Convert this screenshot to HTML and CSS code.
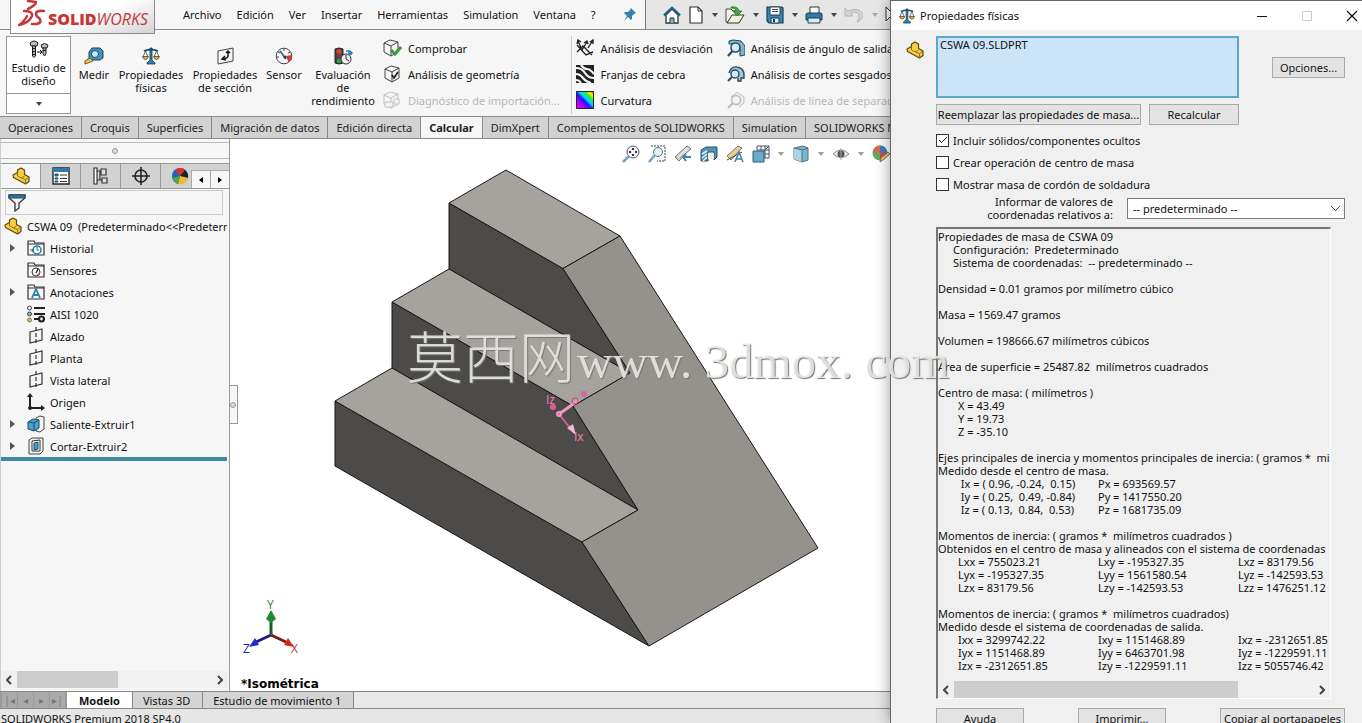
FILE: index.html
```html
<!DOCTYPE html>
<html lang="es">
<head>
<meta charset="utf-8">
<title>SOLIDWORKS Premium 2018 SP4.0</title>
<link rel="stylesheet" href="styles.css">
</head>
<body>
<svg class="defs" aria-hidden="true">
  <defs>
    <symbol id="part" viewBox="0 0 18 18"><path d="M1 8l4.500-2.500V3L9 1l3.500 2v4.500L17 10v4.500L13.500 17 1.500 10.500z" fill="#f7cf45" stroke="#5e450b" stroke-width="1.200" stroke-linejoin="round"/><path d="M5.500 5.500V9l4 2 3-2M13.500 12.500V17M13.500 12.500L17 10M9.500 11l4 1.500" fill="none" stroke="#8a680f" stroke-width=".9"/></symbol>
    <symbol id="scale" viewBox="0 0 18 18"><path d="M8 1h2v12l3 3v1H5v-1l3-3z" fill="#2c81ad" stroke="#123f5c" stroke-width=".8"/><path d="M2 4q7-3 14 0" fill="none" stroke="#174e70" stroke-width="1.800"/><path d="M3.500 4L1 10h5zM14.500 4L12 10h5z" fill="#fff" stroke="#444" stroke-width=".8"/><path d="M.5 9.500h6q-1 3-3 3t-3-3zM11.500 9.500h6q-1 3-3 3t-3-3z" fill="#e6ae3e" stroke="#5b4a1c" stroke-width=".8"/></symbol>
    <symbol id="plane" viewBox="0 0 18 18"><path d="M3 5l12-3v11L3 16z" fill="none" stroke="#333" stroke-width="1.200"/><path d="M9 0v18" stroke="#333" stroke-width="1.200" stroke-dasharray="4 2"/></symbol>
    <symbol id="folder" viewBox="0 0 18 18"><path d="M1 16V2h6l1 2h9v12z" fill="#f6f6f6" stroke="#333" stroke-width="1.200"/><path d="M1 5h16" stroke="#333"/></symbol>
    <symbol id="cube" viewBox="0 0 18 18"><path d="M2 4l6-3 8 2v10l-7 4-7-4z" fill="#f4f4f4" stroke="#444"/><path d="M2 4l7 3 7-4M9 7v10" fill="none" stroke="#444"/></symbol>
    <symbol id="caret" viewBox="0 0 6 4"><path d="M0 0h6L3 4z" fill="currentColor"/></symbol>
    <symbol id="undercut" viewBox="0 0 18 18"><path d="M2 2l4-1 8 1 4 5v9l-5 1V8l-4-3H2z" fill="#7fb3cf" stroke="#24455a"/><circle cx="8.500" cy="8.500" r="4.500" fill="#d6ebf5" stroke="#24506c" stroke-width="1.600"/><path d="M5.500 12L1 17" stroke="#24506c" stroke-width="2.200"/></symbol>
  </defs>
</svg>

<div class="desktop">
  <div class="app">
    <header class="topbar">
      <div class="logo">
        <svg width="32" height="30" viewBox="0 0 32 30" aria-hidden="true"><g fill="none" stroke="#c5383a" stroke-linecap="round" stroke-linejoin="round"><path d="M13 1l8 1q0 3-8 7" stroke-width="2.600"/><path d="M9 11q9 0 8 5-3 7-13 9 5-3 8-9" stroke-width="2.400"/><path d="M29 11q-8-1-8 3 0 2 3 4 4 4-2 6l-5 0" stroke-width="2.600"/></g></svg>
        <span class="brand"><b>SOLID</b>WORKS</span>
      </div>
      <nav class="menu" aria-label="Menú principal">
        <button>Archivo</button><button>Edición</button><button>Ver</button><button>Insertar</button><button>Herramientas</button><button>Simulation</button><button>Ventana</button><button>?</button>
        <button class="pin" aria-label="Fijar menú"><svg width="14" height="14" viewBox="0 0 14 14"><path d="M8 0l5 5-2 1-2 2v3l-1 1-3-3-4 4 3-5-3-3 1-1h3l2-2z" fill="#3a82ae"/></svg></button>
      </nav>
      <div class="quick">
        <button aria-label="Inicio"><svg width="18" height="18" viewBox="0 0 18 18"><path d="M3 9v8h12V9L9 3z" fill="#fff" stroke="#333" stroke-width="1.300"/><path d="M1 9.500L9 2l8 7.500" fill="none" stroke="#1f5f83" stroke-width="2.400"/><path d="M7 17v-5h4v5" fill="#76b4d4" stroke="#333"/></svg></button>
        <button class="split" aria-label="Nuevo"><svg width="16" height="18" viewBox="0 0 16 18"><path d="M2 1h8l4 4v12H2z" fill="#fff" stroke="#333" stroke-width="1.200"/><path d="M10 1v4h4" fill="none" stroke="#333"/></svg><svg class="caret"><use href="#caret"/></svg></button>
        <button class="split" aria-label="Abrir"><svg width="20" height="18" viewBox="0 0 20 18"><path d="M1 16V3h5l2 2h5v11z" fill="#f4f4ec" stroke="#444"/><path d="M2 17l5-8h12l-5 8z" fill="#eef0dc" stroke="#333"/><path d="M6 1q7-1 8 4h3l-5 5-4-5h3q0-3-5-3z" fill="#48a63e" stroke="#1f6b1c" stroke-width=".7"/></svg><svg class="caret"><use href="#caret"/></svg></button>
        <button class="split" aria-label="Guardar"><svg width="18" height="18" viewBox="0 0 18 18"><path d="M1 1h15l1 1v15H3l-2-2z" fill="#3b86b0" stroke="#173e56" stroke-width="1.200"/><path d="M4 1h10v8H4z" fill="#fff" stroke="#173e56"/><path d="M6 3.500h6M6 5.500h6" stroke="#444"/><path d="M5 12h8v5H5z" fill="#d9e8f0" stroke="#173e56"/><path d="M7 13h2v3H7z" fill="#173e56"/></svg><svg class="caret"><use href="#caret"/></svg></button>
        <button class="split" aria-label="Imprimir"><svg width="18" height="18" viewBox="0 0 18 18"><path d="M5 8V1h9v7" fill="#fff" stroke="#333"/><path d="M1 8l2-1h13l1 1v6H1z" fill="#2f7ba6" stroke="#173e56"/><path d="M3 12h12v5H3z" fill="#dcecf5" stroke="#173e56"/></svg><svg class="caret"><use href="#caret"/></svg></button>
        <button class="split off" aria-label="Deshacer" disabled><svg width="20" height="18" viewBox="0 0 20 18"><path d="M1 2v8h8L6.500 7.500Q13 4 15 9q1 4-2 7 7-3 5-9Q15 1 4 5z" fill="#d5d5d5" stroke="#b5b5b5"/></svg><svg class="caret"><use href="#caret"/></svg></button>
        <button aria-label="Seleccionar"><svg width="12" height="18" viewBox="0 0 12 18"><path d="M1 1v14l4-4h6z" fill="#fff" stroke="#333"/></svg></button>
      </div>
    </header>

    <section class="ribbon" aria-label="Calcular">
      <div class="study">
        <button class="study-main"><svg width="20" height="18" viewBox="0 0 20 18"><g fill="#bbb" stroke="#222"><path d="M1 3q4-4 8 0l-1 3H2z"/><path d="M3.500 6h3v10l-1.500 1.500L3.500 16z"/><path d="M12 5q3.500-3 7 0l-1 3h-5z"/><path d="M14 8h3v6l-1.500 2L14 14z"/></g><path d="M3 9l4-1M3 12l4-1M3 15l4-1M14 11l3-1M8 12h5M11 10l2 2-2 2" stroke="#111" fill="none"/></svg>Estudio de<br>diseño</button>
        <button class="study-more" aria-label="Más estudios"><svg class="caret"><use href="#caret"/></svg></button>
      </div>
      <div class="tools">
        <button class="tool w-s"><svg width="20" height="18" viewBox="0 0 20 18"><path d="M5 5l3-4h8l3 3v7l-3 2H5z" fill="#3e93be" stroke="#17455f"/><circle cx="11" cy="7" r="3.500" fill="#cfe8f4" stroke="#17455f"/><path d="M6 11l-5 3v3l8-3z" fill="#eac94d" stroke="#6d5915"/></svg>Medir</button>
        <button class="tool w-l"><svg width="18" height="18"><use href="#scale"/></svg>Propiedades<br>físicas</button>
        <button class="tool w-l"><svg width="18" height="18" viewBox="0 0 18 18"><path d="M2 4l15-3v13L2 17z" fill="#f4f4f4" stroke="#444"/><path d="M12 4v5q0 2-5 3M10 6l2-2 2 2M9 9l-3 3 4 1" fill="none" stroke="#111" stroke-width="1.500"/></svg>Propiedades<br>de sección</button>
        <button class="tool w-m"><svg width="18" height="18" viewBox="0 0 18 18"><circle cx="9" cy="9" r="7.800" fill="#f7f7f7" stroke="#444"/><path d="M11 9l5.500-1v5l-3 2z" fill="#d33b32"/><path d="M9 2v2M3 5l2 1M2 10h2M15 5l-2 1" stroke="#444"/><path d="M5 4l6 8" stroke="#26678b" stroke-width="1.600"/><circle cx="10" cy="10" r="1.500" fill="#333"/></svg>Sensor</button>
        <button class="tool w-l"><svg width="20" height="18" viewBox="0 0 20 18"><path d="M2 2q4-2 8 0v14q-4 2-8 0z" fill="#444" stroke="#222"/><circle cx="6" cy="4.500" r="2.500" fill="#e23a30"/><circle cx="6" cy="9" r="2" fill="#835"/><circle cx="6" cy="14" r="2.300" fill="#2fa246"/><circle cx="13" cy="12" r="5" fill="#eee" stroke="#333"/><path d="M13 8v4l3 2" fill="none" stroke="#222"/><path d="M13 4h3v3l3-1M17 4l2 2-2 2" stroke="#2479aa" stroke-width="1.500" fill="none"/></svg>Evaluación<br>de<br>rendimiento</button>
      </div>
      <div class="checks">
        <button><svg width="20" height="18" viewBox="0 0 20 18"><use href="#cube" width="18" height="18"/><path d="M9 11l4 4 6-7" stroke="#3c9a35" stroke-width="3" fill="none"/></svg>Comprobar</button>
        <button><svg width="20" height="18" viewBox="0 0 20 18"><use href="#cube" width="18" height="18" x="1"/><path d="M10 10l2 3 4-6" stroke="#222" stroke-width="1.800" fill="none"/></svg>Análisis de geometría</button>
        <button disabled><svg width="20" height="18" viewBox="0 0 20 18" opacity=".3"><use href="#cube" width="18" height="18"/><path d="M3 11h8v5H3zM12 8h5v5h-5z" fill="#eee" stroke="#555"/></svg>Diagnóstico de importación...</button>
      </div>
      <div class="checks divided">
        <button><svg width="18" height="18" viewBox="0 0 18 18"><path d="M1 6l9 10 7-3M1 13l6-6 9 9M6 11L2 2M6 11l5-8M12 9l5-8M1 5l1-4 3 2M8 4l3-2 1 3M14 3l3-2v4" fill="none" stroke="#222" stroke-width="1.400"/></svg>Análisis de desviación</button>
        <button><svg width="18" height="18" viewBox="0 0 18 18"><path d="M0 0h18v18H0z" fill="#222"/><path d="M0 3q6 0 9 5t9 5M0 9q4 0 7 4t8 5M5 0q3 4 6 4t7 5M0 15q3 0 5 3" stroke="#f4f4f4" stroke-width="2.200" fill="none"/></svg>Franjas de cebra</button>
        <button><svg width="18" height="18" viewBox="0 0 18 18"><defs><linearGradient id="curv" x2="1" y1="1" y2="0"><stop stop-color="#f0e"/><stop offset=".25" stop-color="#a0f"/><stop offset=".45" stop-color="#21f"/><stop offset=".58" stop-color="#0df"/><stop offset=".72" stop-color="#2e3"/><stop offset=".86" stop-color="#fe0"/><stop offset="1" stop-color="#f20"/></linearGradient></defs><path d="M.5.5h17v17H.5z" fill="url(#curv)" stroke="#222"/></svg>Curvatura</button>
      </div>
      <div class="checks">
        <button><svg width="18" height="18"><use href="#undercut"/></svg>Análisis de ángulo de salida</button>
        <button><svg width="18" height="18" viewBox="0 0 18 18"><path d="M2 8Q4 1 10 2q7 1 7 8v3h-3v3h-3v-3" fill="#a9c6d8" stroke="#29495e" stroke-width="1.400"/><circle cx="8" cy="9" r="4" fill="#d6ebf5" stroke="#24506c" stroke-width="1.500"/><path d="M5 12l-4 4" stroke="#24506c" stroke-width="2.200"/></svg>Análisis de cortes sesgados</button>
        <button disabled><svg width="18" height="18" viewBox="0 0 18 18" opacity=".35"><path d="M4 6l6-5 7 5v6l-5 4" fill="#ddd" stroke="#666"/><circle cx="9" cy="9" r="4.500" fill="#eee" stroke="#555" stroke-width="1.500"/><path d="M6 12l-5 5" stroke="#555" stroke-width="2"/></svg>Análisis de línea de separación</button>
      </div>
    </section>

    <nav class="tabs" aria-label="Pestañas de comandos">
      <button>Operaciones</button><button>Croquis</button><button>Superficies</button><button>Migración de datos</button><button>Edición directa</button><button class="on">Calcular</button><button>DimXpert</button><button>Complementos de SOLIDWORKS</button><button>Simulation</button><button>SOLIDWORKS MBD</button>
    </nav>

    <main class="work">
      <aside class="side">
        <div class="grip"><i></i></div>
        <div class="side-tabs">
          <button class="on" aria-label="Gestor de diseño"><svg width="18" height="18"><use href="#part"/></svg></button>
          <button aria-label="Propiedades"><svg width="18" height="18" viewBox="0 0 18 18"><path d="M1 1h16v16H1z" fill="#fff" stroke="#222" stroke-width="1.400"/><path d="M1 1h16v4H1z" fill="#2e7ba5"/><path d="M3 7h3v2H3zM3 11h3v1H3zM3 14h3v1H3z" fill="#2e7ba5" stroke="#1d5575"/><path d="M8 8h7M8 11.500h7M8 14.500h7" stroke="#333"/></svg></button>
          <button aria-label="Configuraciones"><svg width="16" height="18" viewBox="0 0 16 18"><path d="M1 1h3v16H1zM4 4h5M4 13h5M7 4v9" fill="#fff" stroke="#333" stroke-width="1.200"/><path d="M8 2h5v6H8zM9 11h5v5H9z" fill="#ddd" stroke="#333" stroke-width="1.200"/></svg></button>
          <button aria-label="DimXpert"><svg width="18" height="18" viewBox="0 0 18 18"><circle cx="9" cy="9" r="6" fill="none" stroke="#222" stroke-width="1.600"/><path d="M9 0v18M0 9h18" stroke="#222" stroke-width="1.600"/></svg></button>
          <button aria-label="Apariencias"><svg width="18" height="18" viewBox="0 0 18 18"><circle cx="9" cy="9" r="8" fill="#2460b8"/><path d="M9 9L4 3q7-4 10 0z" fill="#d9322c"/><path d="M9 9l5-6q4 4 3 8z" fill="#222"/><path d="M9 9l8 2q-3 8-10 6z" fill="#efbd2b"/><path d="M9 9L7 17Q3 16 1 11z" fill="#4aa748"/></svg></button>
          <div class="steps"><button aria-label="Anterior"><svg width="4" height="6" viewBox="0 0 4 6"><path d="M4 0v6L0 3z"/></svg></button><button aria-label="Siguiente"><svg width="4" height="6" viewBox="0 0 4 6"><path d="M0 0v6l4-3z"/></svg></button></div>
        </div>
        <label class="filter"><svg width="18" height="18" viewBox="0 0 18 18"><path d="M1 1h16v3l-6 5v5l-4 3V9L1 4z" fill="#eef4f8" stroke="#333" stroke-width="1.300"/><path d="M1 1h16v3H1z" fill="#2e7ba5" stroke="#1a4b66"/></svg><input type="text" aria-label="Filtro"></label>
        <div class="root"><svg width="18" height="18"><use href="#part"/></svg><span>CSWA 09&nbsp; (Predeterminado&lt;&lt;Predeterminado&gt;)</span></div>
        <ul class="tree">
          <li class="open"><svg width="18" height="18" viewBox="0 0 18 18"><use href="#folder"/><circle cx="10" cy="11" r="4" fill="#fff" stroke="#27769f" stroke-width="1.500"/><path d="M10 8v3h2M3 11h4M5 13l1-3" stroke="#27769f" fill="none"/></svg>Historial</li>
          <li><svg width="18" height="18" viewBox="0 0 18 18"><use href="#folder"/><circle cx="9" cy="11" r="4" fill="#fff" stroke="#333"/><path d="M9 12l2-4" stroke="#222" stroke-width="1.400"/><path d="M10 13l3-1-2 3z" fill="#d43"/></svg>Sensores</li>
          <li class="open"><svg width="18" height="18" viewBox="0 0 18 18"><use href="#folder"/><path d="M5 15l4-9 4 9M6 12h6" stroke="#2c7fac" stroke-width="1.800" fill="none"/></svg>Anotaciones</li>
          <li><svg width="18" height="18" viewBox="0 0 18 18"><path d="M7 3h11M7 9h11M7 14h5" stroke="#222" stroke-width="2"/><circle cx="2.500" cy="3" r="2" fill="#eee" stroke="#444"/><circle cx="2.500" cy="9" r="2" fill="#77b7db" stroke="#444"/><circle cx="2.500" cy="15" r="2" fill="#edb945" stroke="#777"/><circle cx="14.500" cy="14" r="2.500" fill="none" stroke="#222" stroke-width="2.200"/></svg>AISI 1020</li>
          <li><svg width="18" height="18"><use href="#plane"/></svg>Alzado</li>
          <li><svg width="18" height="18"><use href="#plane"/></svg>Planta</li>
          <li><svg width="18" height="18"><use href="#plane"/></svg>Vista lateral</li>
          <li><svg width="18" height="18" viewBox="0 0 18 18"><path d="M3 2v13h13" fill="none" stroke="#222" stroke-width="2"/><path d="M0 4l3-4 3 4zM14 12l4 3-4 3z" fill="#222"/><circle cx="3" cy="15" r="2" fill="#222"/></svg>Origen</li>
          <li class="open"><svg width="18" height="18" viewBox="0 0 18 18"><path d="M9 3l4-2 4 1v12l-4 3-4-1z" fill="#f4f4f4" stroke="#444"/><path d="M1 7l5-3 6 1v8l-5 3-6-2z" fill="#4ba3cb" stroke="#174b67"/><path d="M1 7l6 1 5-3M7 8v8" fill="none" stroke="#174b67"/></svg>Saliente-Extruir1</li>
          <li class="open"><svg width="18" height="18" viewBox="0 0 18 18"><path d="M2 3l3-2h11v13l-3 3H2z" fill="#f3f3f3" stroke="#444"/><path d="M5 4l8-1v11H5z" fill="#fff" stroke="#333"/><path d="M7 6l4-1v7l-4 1z" fill="#4aa1cc" stroke="#174b67"/></svg>Cortar-Extruir2</li>
        </ul>
        <div class="rollback"></div>
        <div class="hscroll side-scroll"><button aria-label="Izquierda"><svg width="6" height="10" viewBox="0 0 6 10"><path d="M5 1L1 5l4 4"/></svg></button><span class="track"><i></i></span><button aria-label="Derecha"><svg width="6" height="10" viewBox="0 0 6 10"><path d="M1 1l4 4-4 4"/></svg></button></div>
      </aside>

      <section class="view" aria-label="Vista del modelo">
        <svg class="model" viewBox="230 139 660 552" preserveAspectRatio="xMinYMin meet">
          <g stroke="#161616" stroke-width="1" stroke-linejoin="round">
            <path d="M449 203L563 268.500 630 373 449 269z" fill="#4d4b49"/>
            <path d="M392 302L573 406 638 510 392 368z" fill="#4d4b49"/>
            <path d="M335 401L582 542 649 646 335 466z" fill="#4d4b49"/>
            <path d="M506 170L449 203 563 268.500 620 236z" fill="#a6a29e"/>
            <path d="M449 269L392 302 573 406 630 373z" fill="#a6a29e"/>
            <path d="M392 368L335 401 582 542 638 510z" fill="#a6a29e"/>
            <path d="M620 236L818 548 649 646 582 542 638 510 573 406 630 373 563 268.500z" fill="#95928d"/>
          </g>
          <g stroke="#f29ac5" fill="#e4579b" stroke-width="3"><path d="M559 414L579 400" /><path d="M559 414l11 14" stroke="#d95a98" stroke-width="2"/><path d="M567 428l9 7-3-11z" fill="#f5b7d4" stroke="none"/><circle cx="559" cy="414" r="2" stroke-width="2"/><circle cx="553" cy="407" r="3" stroke="none"/><circle cx="575" cy="401" r="3" fill="none" stroke="#b94a7d" stroke-width="1"/><circle cx="584" cy="394" r="3" stroke="none" opacity=".8"/></g>
          <text class="axis" x="546" y="404" fill="#ee83b7">Iz</text><text class="axis" x="574" y="441" fill="#ee83b7">Ix</text>
          <path d="M271 634v-16" stroke="#185e25" stroke-width="3"/><path d="M271 610l5 9-5 4-5-4z" fill="#208a36"/>
          <path d="M271 635l-15 7" stroke="#1b1b8a" stroke-width="3"/><path d="M249 647l6-9 4 7z" fill="#2529c9"/>
          <path d="M271 635l15 7" stroke="#7b1b17" stroke-width="3"/><path d="M294 647l-10-2 4-7z" fill="#cf2a20"/>
          <text class="axis" x="267" y="609" fill="#2a8037">Y</text><text class="axis" x="243" y="653" fill="#2222a5">Z</text><text class="axis" x="291" y="653" fill="#c9312a">X</text>
          <text class="iso" x="241" y="688">*Isométrica</text>
        </svg>
        <div class="hud">
          <button aria-label="Zoom ajustar"><svg width="18" height="18" viewBox="0 0 18 18"><circle cx="11" cy="7" r="6" fill="#f5f5f5" stroke="#557"/><path d="M7 11l-6 6" stroke="#69a5c5" stroke-width="2.500"/><path d="M11 3v8M7 7h8" stroke="#333" stroke-width="2" stroke-dasharray="2 4 2 0"/></svg></button>
          <button aria-label="Zoom encuadre"><svg width="18" height="18" viewBox="0 0 18 18"><path d="M3 1h14v15H9" fill="none" stroke="#444" stroke-dasharray="2 1"/><circle cx="10" cy="7" r="4.500" fill="#e4eff5" stroke="#577"/><path d="M7 10l-6 7" stroke="#69a5c5" stroke-width="2.500"/></svg></button>
          <button aria-label="Vista previa"><svg width="18" height="18" viewBox="0 0 18 18"><path d="M1 12L13 1l4 3L5 14z" fill="#dedede" stroke="#667"/><path d="M1 12l4 4 3-3" fill="#e9c7a4" stroke="#776"/><path d="M17 12h-7M12 9l-3 3 3 4" fill="none" stroke="#3c88b0" stroke-width="2"/></svg></button>
          <button aria-label="Vista de sección"><svg width="18" height="18" viewBox="0 0 18 18"><path d="M1 5l5-3h11v10l-3 3V7H8v9H1z" fill="#4d94bb" stroke="#2d5167"/><path d="M2 9l5-3M2 13l5-4M3 16l4-4" stroke="#e3eff5" stroke-width="1.500"/><path d="M8 8h6v6H8z" fill="#f0ead8"/></svg></button>
          <button aria-label="Anotaciones dinámicas"><svg width="18" height="18" viewBox="0 0 18 18"><path d="M1 11L12 1l4 2L5 15z" fill="#e9ce91" stroke="#776"/><path d="M1 15l15-8" stroke="#444"/><path d="M9 17l4-10 4 10M10 14h6" stroke="#3782ad" stroke-width="1.500" fill="none"/></svg></button>
          <button class="split" aria-label="Orientación"><svg width="18" height="18" viewBox="0 0 18 18"><path d="M5 1h12v12h-5M5 1v4M9 1v5M5 5h12M13 1v12M12 9h5M12 6l5-5" fill="none" stroke="#456"/><path d="M1 6h11v11H1z" fill="#6aaacb" stroke="#335c73"/></svg><svg class="caret"><use href="#caret"/></svg></button>
          <button class="split" aria-label="Estilo de visualización"><svg width="18" height="18" viewBox="0 0 18 18"><path d="M2 3l9-2 5 2v12l-6 2-8-3z" fill="#79b5d2" stroke="#54707f"/><path d="M2 3l8 2v12l-8-3z" fill="#aed5e7"/><path d="M2 3l8 2 6-2M10 5v12" fill="none" stroke="#54707f"/></svg><svg class="caret"><use href="#caret"/></svg></button>
          <button class="split" aria-label="Ocultar/mostrar"><svg width="18" height="18" viewBox="0 0 18 18"><path d="M1 9q8-8 16 0-8 7-16 0z" fill="#eee" stroke="#888"/><circle cx="9" cy="9" r="3.500" fill="#555"/><path d="M9 3v12" stroke="#aaa"/></svg><svg class="caret"><use href="#caret"/></svg></button>
          <button aria-label="Editar apariencia"><svg width="18" height="18" viewBox="0 0 18 18"><circle cx="8" cy="8" r="7.500" fill="#5bae61"/><path d="M8 8V.5a7.500 7.500 0 0 1 7.500 7.500z" fill="#4679ba"/><path d="M8 8h7.500Q14 14 8 15.500z" fill="#d9463e"/><path d="M8 8V.5Q2 1 .5 7z" fill="#d96b4e"/><path d="M9 13l7-6 2 2-7 6-3 2z" fill="#e9c670" stroke="#775"/></svg></button>
        </div>
        <button class="handle" aria-label="Contraer panel"><i></i></button>
      </section>
    </main>

    <footer class="bottom">
      <div class="pager"><button disabled aria-label="Primera">|◂</button><button disabled aria-label="Anterior">◂</button><button disabled aria-label="Siguiente">▸</button><button disabled aria-label="Última">▸|</button></div>
      <button class="sheet on">Modelo</button><button class="sheet">Vistas 3D</button><button class="sheet">Estudio de movimiento 1</button>
    </footer>
    <div class="status">SOLIDWORKS Premium 2018 SP4.0</div>
  </div>

  <div class="dialog" role="dialog" aria-labelledby="dlg-title">
    <div class="titlebar">
      <svg width="16" height="16"><use href="#scale"/></svg>
      <h1 id="dlg-title">Propiedades físicas</h1>
      <button aria-label="Minimizar"><svg width="12" height="12" viewBox="0 0 12 12"><path d="M1 6.500h10" stroke="#111"/></svg></button>
      <button aria-label="Maximizar" disabled><svg width="12" height="12" viewBox="0 0 12 12"><path d="M1.500 1.500h9v9h-9z" fill="none" stroke="#ccc"/></svg></button>
      <button aria-label="Cerrar"><svg width="12" height="12" viewBox="0 0 12 12"><path d="M1 1l10 10M11 1L1 11" stroke="#111" stroke-width="1.200"/></svg></button>
    </div>
    <div class="content">
      <div class="pick">
        <svg width="18" height="18"><use href="#part"/></svg>
        <textarea aria-label="Selección" spellcheck="false" readonly>CSWA 09.SLDPRT</textarea>
        <button class="btn">Opciones...</button>
      </div>
      <div class="indent">
        <div class="pair"><button class="btn">Reemplazar las propiedades de masa...</button><button class="btn">Recalcular</button></div>
        <label class="check"><input type="checkbox" checked>Incluir sólidos/componentes ocultos</label>
        <label class="check"><input type="checkbox">Crear operación de centro de masa</label>
        <label class="check"><input type="checkbox">Mostrar masa de cordón de soldadura</label>
        <div class="coords"><label for="cs">Informar de valores de<br>coordenadas relativos a:</label><select id="cs"><option>-- predeterminado --</option></select></div>
        <div class="results">
          <div class="report">
            <p>Propiedades de masa de CSWA 09</p>
            <p class="in">Configuración:&nbsp; Predeterminado</p>
            <p class="in">Sistema de coordenadas:&nbsp; -- predeterminado --</p>
            <p class="gap">Densidad = 0.01 gramos por milímetro cúbico</p>
            <p class="gap">Masa = 1569.47 gramos</p>
            <p class="gap">Volumen = 198666.67 milímetros cúbicos</p>
            <p class="gap">Área de superficie = 25487.82&nbsp; milímetros cuadrados</p>
            <p class="gap">Centro de masa: ( milímetros )</p>
            <table><tr><td>X = 43.49</td></tr><tr><td>Y = 19.73</td></tr><tr><td>Z = -35.10</td></tr></table>
            <p class="gap">Ejes principales de inercia y momentos principales de inercia: ( gramos *&nbsp; milímetros cuadrados )</p>
            <p>Medido desde el centro de masa.</p>
            <table><tr><td>&nbsp;Ix = ( 0.96, -0.24,&nbsp; 0.15)</td><td>Px = 693569.57</td></tr><tr><td>&nbsp;Iy = ( 0.25,&nbsp; 0.49, -0.84)</td><td>Py = 1417550.20</td></tr><tr><td>&nbsp;Iz = ( 0.13,&nbsp; 0.84,&nbsp; 0.53)</td><td>Pz = 1681735.09</td></tr></table>
            <p class="gap">Momentos de inercia: ( gramos *&nbsp; milímetros cuadrados )</p>
            <p>Obtenidos en el centro de masa y alineados con el sistema de coordenadas</p>
            <table><tr><td>Lxx = 755023.21</td><td>Lxy = -195327.35</td><td>Lxz = 83179.56</td></tr><tr><td>Lyx = -195327.35</td><td>Lyy = 1561580.54</td><td>Lyz = -142593.53</td></tr><tr><td>Lzx = 83179.56</td><td>Lzy = -142593.53</td><td>Lzz = 1476251.12</td></tr></table>
            <p class="gap">Momentos de inercia: ( gramos *&nbsp; milímetros cuadrados)</p>
            <p>Medido desde el sistema de coordenadas de salida.</p>
            <table><tr><td>Ixx = 3299742.22</td><td>Ixy = 1151468.89</td><td>Ixz = -2312651.85</td></tr><tr><td>Iyx = 1151468.89</td><td>Iyy = 6463701.98</td><td>Iyz = -1229591.11</td></tr><tr><td>Izx = -2312651.85</td><td>Izy = -1229591.11</td><td>Izz = 5055746.42</td></tr></table>
          </div>
          <div class="hscroll"><button aria-label="Izquierda"><svg width="6" height="10" viewBox="0 0 6 10"><path d="M5 1L1 5l4 4"/></svg></button><span class="track wide"><i></i></span><button aria-label="Derecha"><svg width="6" height="10" viewBox="0 0 6 10"><path d="M1 1l4 4-4 4"/></svg></button></div>
        </div>
        <div class="actions"><button class="btn">Ayuda</button><button class="btn">Imprimir...</button><button class="btn">Copiar al portapapeles</button></div>
      </div>
    </div>
  </div>

  <div class="watermark"><span class="han">莫西网</span><span>www. 3dmox. com</span></div>
</div>
</body>
</html>
```
FILE: styles.css
```css
* { box-sizing: border-box; }
body { margin: 0; font: 11px/13px "Noto Sans", "Open Sans", sans-serif; color: #111; }
button, input, select, textarea { font: inherit; color: inherit; margin: 0; padding: 0; border: 0; background: none; }
button { white-space: nowrap; }
svg { flex: none; display: block; }
p, h1, ul { margin: 0; padding: 0; font: inherit; list-style: none; }
.defs { position: absolute; width: 0; height: 0; }

.desktop { position: relative; display: flex; height: 100vh; overflow: hidden; }
.app { flex: 1; min-width: 0; display: flex; flex-direction: column; overflow: hidden; background: #f6f6f6; }

/* Menu bar */
.topbar { display: flex; height: 30px; flex: none; border-bottom: 1px solid #8a8a8a; padding-left: 10px; }
.logo { position: relative; z-index: 1; flex: none; display: flex; align-items: center; gap: 1px; width: 145px; height: 34px; padding: 0 4px 4px; border: 1px solid #8a8a8a; border-top: 0; background: linear-gradient(160deg, #fff 50%, #d4d4d4); }
.brand { font: italic 16px/20px "Open Sans", sans-serif; color: #c5383a; padding-top: 8px; }
.brand b { font-weight: 800; font-style: normal; }
.menu { flex: none; display: flex; align-items: center; gap: 15px; width: 491px; padding: 0 8px 0 28px; border-right: 1px solid #777; }
.menu .pin { margin-left: auto; }
.quick { flex: 1; min-width: 0; display: flex; align-items: center; gap: 7px; padding-left: 17px; background: #e6e6e6; }
.split { display: flex; align-items: center; gap: 8px; }
.caret { width: 6px; height: 4px; color: #444; }
.off .caret { color: #aaa; }

/* Ribbon */
.ribbon { display: flex; flex: none; height: 86px; padding: 6px 0 2px 6px; overflow: hidden; }
.study { flex: none; width: 65px; height: 78px; display: flex; flex-direction: column; border: 1px solid #999; background: #fff; }
.study button { display: flex; flex-direction: column; align-items: center; }
.study-main { flex: 1; gap: 3px; padding-top: 3px; }
.study-more { height: 20px; justify-content: center; border-top: 1px solid #999; }
.tools { display: flex; flex: none; padding: 11px 0 0 3px; }
.tool { display: flex; flex-direction: column; align-items: center; gap: 3px; }
.w-s { width: 40px; }
.w-m { width: 44px; }
.w-l { width: 74px; }
.checks { flex: none; display: flex; flex-direction: column; gap: 8px; padding: 3px 0 0 2px; }
.checks button { display: flex; align-items: center; gap: 6px; height: 18px; }
.checks button:disabled { color: #b8b8b8; }
.divided { border-left: 1px solid #ccc; margin-left: 11px; padding: 3px 12px 0 4px; }
.divided button { gap: 7px; }

/* Command tabs */
.tabs { display: flex; flex: none; height: 23px; background: #d2d2d2; border-top: 1px solid #8a8a8a; border-bottom: 1px solid #8a8a8a; overflow: hidden; }
.tabs button { flex: none; padding: 0 8px; border-right: 1px solid #8a8a8a; color: #222; }
.tabs .on { background: #f6f6f6; font-weight: 700; }

/* Design tree panel */
.work { flex: 1; min-height: 0; display: flex; }
.side { flex: none; width: 230px; display: flex; flex-direction: column; border-right: 1px solid #999; border-left: 1px solid #ccc; }
.grip { margin: 3px 0 4px; height: 17px; border-top: 1px solid #bbb; border-bottom: 1px solid #bbb; display: flex; align-items: center; justify-content: center; }
.grip i, .handle i { width: 6px; height: 6px; border: 1px solid #999; border-radius: 50%; background: #ddd; }
.side-tabs { display: flex; height: 26px; background: #d2d2d2; border-top: 1px solid #999; border-bottom: 1px solid #999; }
.side-tabs > button { width: 40px; display: flex; align-items: center; justify-content: center; border-right: 1px solid #999; }
.side-tabs > .on { background: #f6f6f6; }
.side-tabs > button:nth-child(5) { width: 30px; padding-left: 8px; border: 0; }
.steps { flex: 1; display: flex; align-items: flex-end; }
.steps button { flex: 1; height: 18px; display: flex; align-items: center; justify-content: center; background: #f6f6f6; border: 1px solid #aaa; border-width: 1px 0 0 1px; }
.filter { margin: 1px 6px 0 4px; height: 25px; display: flex; align-items: center; border: 1px solid #ccc; padding: 0 2px; }
.filter input { flex: 1; min-width: 0; outline: 0; }
.root { display: flex; align-items: center; gap: 5px; height: 22px; padding-left: 3px; margin-right: 2px; overflow: hidden; white-space: nowrap; }
.tree li { position: relative; display: flex; align-items: center; gap: 5px; height: 22px; padding-left: 26px; }
.tree .open::before { content: ""; position: absolute; left: 9px; border: 4px solid transparent; border-left: 5px solid #555; border-right: 0; }
.rollback { height: 4px; margin-right: 2px; background: #3f88a3; }
.hscroll { display: flex; height: 17px; background: #f0f0f0; }
.hscroll button { width: 16px; display: flex; align-items: center; justify-content: center; }
.hscroll path { fill: none; stroke: #444; stroke-width: 2; }
.track { flex: 1; display: flex; }
.track i { width: 52%; background: #cdcdcd; }
.track.wide i { width: 79%; }
.side-scroll { margin: auto 1px 3px 0; }

/* Graphics area */
.view { position: relative; flex: 1; min-width: 0; background: #fff; overflow: hidden; }
.model { width: 100%; height: 100%; }
.axis { font: 12px "Open Sans", sans-serif; }
.iso { font: 700 12px "DejaVu Sans", sans-serif; }
.hud { position: absolute; top: 6px; right: 0; width: 270px; display: flex; align-items: center; gap: 8px; padding-left: 2px; }
.hud .caret { color: #999; }
.handle { position: absolute; left: 0; top: 246px; width: 8px; height: 39px; display: flex; align-items: center; background: #f6f6f6; border: 1px solid #999; border-left: 0; }

/* Sheet tabs and status bar */
.bottom { display: flex; flex: none; height: 18px; background: #e8e8e8; border-top: 1px solid #888; border-bottom: 1px solid #888; }
.pager { width: 67px; display: flex; gap: 1px; padding: 0 2px; background: #999; }
.pager button { flex: 1; background: #aaa; color: #777; font-size: 10px; }
.sheet { padding: 0 12px 0 10px; background: #d4d4d4; border-right: 1px solid #888; }
.sheet.on { background: #fff; font-weight: 700; padding: 0 12px; }
.status { flex: none; height: 14px; padding-left: 1px; background: #e6e6e6; line-height: 20px; overflow: hidden; }

/* Mass properties dialog */
.dialog { position: relative; flex: none; width: 472px; background: #f0f0f0; border: 1px solid #666; border-width: 1px 0 0 1px; box-shadow: 0 0 14px rgba(0, 0, 0, .4); overflow: hidden; }
.titlebar { display: flex; align-items: center; height: 29px; padding: 0 4px 0 8px; background: #fff; }
.titlebar h1 { flex: 1; padding-left: 5px; }
.titlebar button { margin-left: 33px; }
.content { padding: 6px 17px 0 15px; }
.pick { display: grid; grid-template-columns: 30px 303px 1fr; align-items: start; }
.pick > svg { margin-top: 5px; }
.pick textarea { height: 62px; padding: 0 2px; resize: none; overflow: hidden; outline: 0; background: #cce4f8; border: 2px solid #5aa9cc; }
.btn { height: 21px; background: #e3e3e3; border: 1px solid #a9a9a9; }
.pick .btn { justify-self: end; align-self: center; width: 73px; }
.indent { padding-left: 30px; }
.pair { display: grid; grid-template-columns: 205px 90px; gap: 8px; margin: 6px 0 4px; }
.check { display: flex; align-items: center; gap: 4px; height: 22px; }
.check input { appearance: none; width: 13px; height: 13px; background: #fff; border: 1px solid #333; }
.check input:checked { background: linear-gradient(-45deg, transparent 44%, #333 44% 56%, transparent 56%) 4px 2px / 6px 6px no-repeat, linear-gradient(45deg, transparent 40%, #333 40% 60%, transparent 60%) 2px 5px / 3px 3px no-repeat, #fff; }
.coords { display: flex; justify-content: flex-end; align-items: center; gap: 14px; text-align: right; margin-bottom: 6px; }
.coords select { width: 218px; height: 21px; padding: 0 5px; appearance: none; border: 1px solid #7a7a7a; background: linear-gradient(-45deg, transparent 42%, #555 42% 58%, transparent 58%) right 4px center / 5px 5px no-repeat, linear-gradient(45deg, transparent 42%, #555 42% 58%, transparent 58%) right 8px center / 5px 5px no-repeat, #fff; }
.results { width: 395px; border: 2px solid #777; border-width: 2px 1px 1px 2px; border-right-color: #fff; border-bottom-color: #fff; }
.report { height: 452px; padding-top: 1px; overflow: hidden; white-space: nowrap; }
.in { padding-left: 15px; }
.gap { margin-top: 13px; }
.report table { margin-left: 20px; border-spacing: 0; }
.report td { padding: 0; width: 140px; min-width: 140px; }
.actions { display: flex; justify-content: space-between; margin-top: 9px; }
.actions .btn { min-width: 88px; padding: 0 3px; }

/* Watermark across both windows */
.watermark { position: absolute; left: 407px; top: 319px; display: flex; align-items: baseline; gap: 2px; font: 49px/70px "Liberation Serif", serif; color: rgba(238, 238, 234, .85); text-shadow: 1px 1px 1px #777; white-space: nowrap; pointer-events: none; }
.han { font: 300 56px/70px "Noto Sans CJK SC", sans-serif; }
```
